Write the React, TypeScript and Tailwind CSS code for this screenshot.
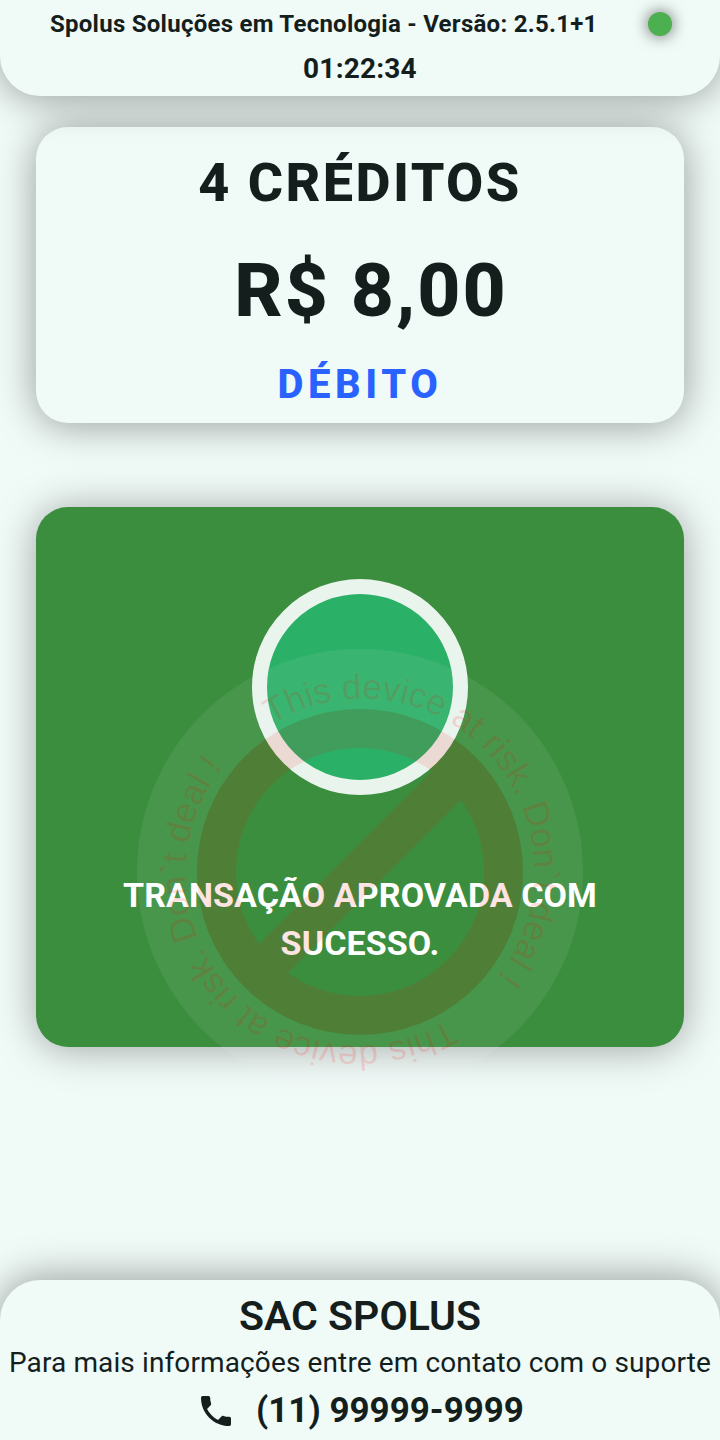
const WATERMARK = "This device at risk. Don`t deal !";

function PhoneIcon() {
  return (
    <svg viewBox="0 0 24 24" className="h-10 w-10 fill-[#141f1d]">
      <path d="M6.62 10.79c1.44 2.83 3.76 5.14 6.59 6.59l2.2-2.2c.27-.27.67-.36 1.02-.24 1.12.37 2.33.57 3.57.57.55 0 1 .45 1 1V20c0 .55-.45 1-1 1-9.39 0-17-7.61-17-17 0-.55.45-1 1-1h3.5c.55 0 1 .45 1 1 0 1.25.2 2.45.57 3.57.11.35.03.74-.25 1.02l-2.2 2.2z" />
    </svg>
  );
}

function Watermark() {
  return (
    <svg viewBox="0 0 460 460" className="pointer-events-none absolute left-[130px] top-[642px] h-[460px] w-[460px]">
      <circle cx="230" cy="230" r="193" fill="none" stroke="#ffffff" strokeOpacity="0.07" strokeWidth="60" />
      <g opacity="0.1" fill="none" stroke="#ff0000">
        <circle cx="230" cy="230" r="143.5" strokeWidth="39" />
        <path d="M130 330 L330 130" strokeWidth="41" />
      </g>
      <defs>
        <path id="ring" d="M141.4 82.6 A172 172 0 1 1 318.6 377.4 A172 172 0 1 1 141.4 82.6" />
      </defs>
      <text fill="#ff0000" fillOpacity="0.14" fontSize="35" className="font-['Liberation_Sans',sans-serif]">
        <textPath href="#ring" startOffset="0%">{WATERMARK}</textPath>
      </text>
      <text fill="#ff0000" fillOpacity="0.14" fontSize="35" className="font-['Liberation_Sans',sans-serif]">
        <textPath href="#ring" startOffset="50%">{WATERMARK}</textPath>
      </text>
    </svg>
  );
}

export default function App() {
  return (
    <div className="relative flex h-[1440px] w-[720px] flex-col overflow-hidden bg-[#f0faf7] font-['Roboto',sans-serif] text-[#141f1d]">
      <header className="relative flex h-24 flex-col items-center rounded-b-[40px] bg-[#f0faf7] shadow-[0_2px_40px_rgba(0,0,0,0.38)]">
        <div className="mt-[6px] flex w-full items-center">
          <span className="ml-[50px] text-[24px] leading-[36px] font-bold tracking-[0.26px]">Spolus Soluções em Tecnologia - Versão: 2.5.1+1</span>
          <span className="ml-[50px] h-6 w-6 rounded-full bg-[#4caf50] shadow-[0_0_16px_rgba(0,0,0,0.6)]" />
        </div>
        <span className="mt-[9px] text-[28px] leading-[36px] font-bold tracking-[0.2px]">01:22:34</span>
      </header>

      <section className="mx-9 mt-[31px] flex h-[296px] flex-col items-center rounded-[32px] bg-[#f0faf7] shadow-[0_2px_40px_rgba(0,0,0,0.38)]">
        <h1 className="mt-[24px] text-[54px] leading-[64px] font-extrabold tracking-[2.4px]">4 CRÉDITOS</h1>
        <p className="mt-[33px] ml-[22px] text-[75px] leading-[84px] font-extrabold tracking-[2px]">R$ 8,00</p>
        <p className="mt-[29px] text-[40px] leading-[48px] font-extrabold tracking-[4.6px] text-[#2962ff]">DÉBITO</p>
      </section>

      <section className="mx-9 mt-[84px] flex h-[540px] flex-col items-center rounded-[32px] bg-[#3b8e3e] shadow-[0_2px_40px_rgba(0,0,0,0.34)]">
        <div className="mt-[72px] h-[216px] w-[216px] rounded-full border-[15px] border-[#e9f4ed] bg-[#2bb067]" />
        <p className="mt-[76px] w-[500px] text-center text-[34px] leading-[48px] font-bold tracking-[0.1px] text-white">TRANSAÇÃO APROVADA COM SUCESSO.</p>
      </section>

      <footer className="relative mt-auto flex h-40 flex-col items-center rounded-t-[40px] bg-[#f0faf7] shadow-[0_-2px_40px_rgba(0,0,0,0.38)]">
        <h2 className="mt-[12px] text-[41px] leading-[48px] font-semibold">SAC SPOLUS</h2>
        <p className="mt-[5px] text-[28px] leading-[36px] tracking-[0.12px] whitespace-nowrap">Para mais informações entre em contato com o suporte</p>
        <div className="mt-[6px] flex items-center gap-[20px]">
          <PhoneIcon />
          <span className="text-[35px] leading-[48px] font-bold">(11) 99999-9999</span>
        </div>
      </footer>

      <Watermark />
    </div>
  );
}
